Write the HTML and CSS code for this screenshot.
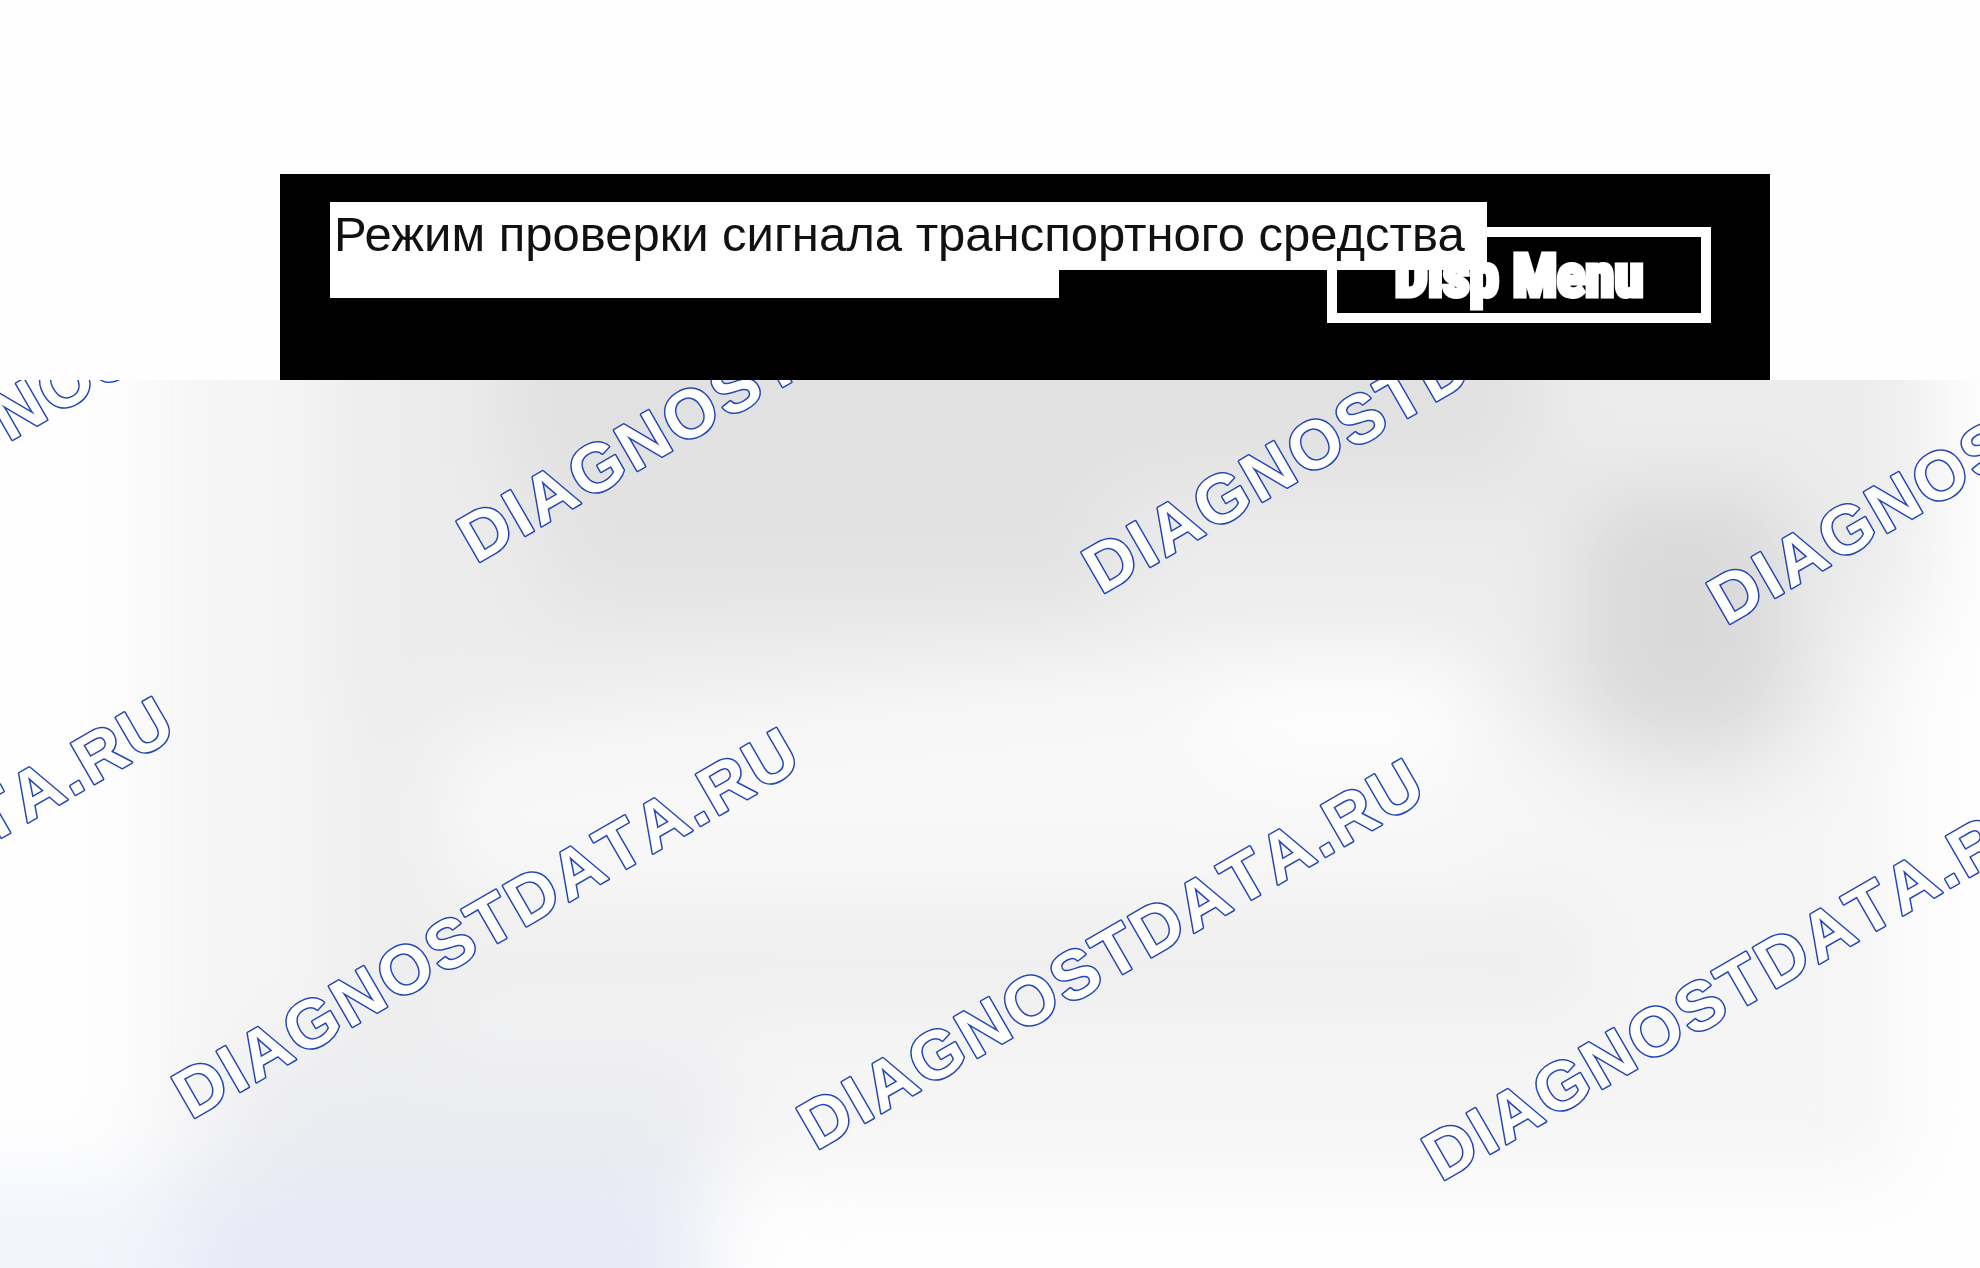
FILE: index.html
```
<!DOCTYPE html>
<html lang="ru">
<head>
    <meta charset="utf-8">
    <title>Режим проверки сигнала транспортного средства</title>
    <link rel="stylesheet" href="styles.css">
</head>
<body>
    <div id="display">
        <button type="button" id="menu-btn">Disp Menu</button>
        <div id="caption">
            <h1>Режим проверки сигнала транспортного средства</h1>
            <div class="second-line"></div>
        </div>
    </div>
    <div id="backdrop">
        <svg class="shade" viewBox="0 0 1980 888" preserveAspectRatio="none" aria-hidden="true">
            <defs>
                <filter id="soft" filterUnits="userSpaceOnUse" x="-300" y="-300" width="2600" height="1500">
                    <feGaussianBlur stdDeviation="42"/>
                </filter>
            </defs>
            <g filter="url(#soft)">
                <rect x="150" y="-300" width="1770" height="1100" fill="#f5f5f5"/>
                <rect x="330" y="-300" width="1600" height="540" fill="#ececec"/>
                <rect x="330" y="200" width="1520" height="140" fill="#ececec"/>
                <rect x="500" y="-300" width="1040" height="410" fill="#e1e1e1"/>
                <rect x="540" y="100" width="580" height="130" fill="#e2e2e2"/>
                <rect x="330" y="340" width="110" height="420" fill="#eeeeee"/>
                <path d="M600 330L1200 270H1480V510H460V370z" fill="#f8f8f8"/>
                <rect x="1220" y="290" width="250" height="90" fill="#fefefe"/>
                <rect x="440" y="530" width="1150" height="100" fill="#eeeeee"/>
                <rect x="1580" y="110" width="210" height="250" fill="#d9d9d9"/>
                <rect x="1620" y="340" width="150" height="60" fill="#e2e2e2"/>
                <rect x="1900" y="280" width="320" height="800" fill="#fefefe"/>
                <rect x="240" y="670" width="480" height="120" fill="#ebecf0"/>
                <rect x="160" y="790" width="540" height="300" fill="#e7eaf6"/>
                <rect x="-300" y="800" width="480" height="300" fill="#f2f4fc"/>
                <rect x="800" y="820" width="1400" height="300" fill="#fefefe"/>
            </g>
        </svg>
        <svg class="watermark">
            <text transform="translate(-149 153) rotate(-30)">DIAGNOSTDATA.RU</text>
            <text transform="translate(476 184) rotate(-30)">DIAGNOSTDATA.RU</text>
            <text transform="translate(1101 215) rotate(-30)">DIAGNOSTDATA.RU</text>
            <text transform="translate(1726 246) rotate(-30)">DIAGNOSTDATA.RU</text>
            <text transform="translate(-434 709) rotate(-30)">DIAGNOSTDATA.RU</text>
            <text transform="translate(191 740) rotate(-30)">DIAGNOSTDATA.RU</text>
            <text transform="translate(816 771) rotate(-30)">DIAGNOSTDATA.RU</text>
            <text transform="translate(1441 802) rotate(-30)">DIAGNOSTDATA.RU</text>
        </svg>
    </div>
</body>
</html>
```
FILE: styles.css
```
* {
    box-sizing: border-box;
}
body {
    display: flex;
    flex-direction: column;
    min-height: 100vh;
    margin: 0;
    background-color: #fefefe;
    font-family: "Liberation Sans", Arial, sans-serif;
}
#display {
    display: grid;
    grid-template-columns: 1fr;
    align-items: start;
    margin: 174px 210px 0 280px;
    padding: 28px 59px 82px 50px;
    background-color: black;
}
#caption {
    grid-area: 1 / 1;
    justify-self: start;
    z-index: 1;
}
#caption h1 {
    margin: 0;
    padding: 0 22px 4px 4px;
    background-color: white;
    color: #111;
    font-size: 49px;
    font-weight: normal;
    line-height: 64px;
    white-space: nowrap;
}
#caption .second-line {
    width: 63%;
    height: 28px;
    background-color: white;
}
#menu-btn {
    grid-area: 1 / 1;
    justify-self: end;
    width: 384px;
    height: 96px;
    margin: 25px 0 -26px;
    padding: 0;
    border: 10px solid white;
    background-color: black;
    color: white;
    font-family: "Roboto Condensed", Roboto, "Liberation Sans", sans-serif;
    font-size: 59px;
    font-weight: bold;
    -webkit-text-stroke: 5px white;
    cursor: pointer;
}
#backdrop {
    position: relative;
    flex: 1;
    overflow: hidden;
}
#backdrop svg {
    position: absolute;
    top: 0;
    left: 0;
    width: 100%;
    height: 100%;
}
.watermark text {
    fill: white;
    stroke: #2446b4;
    stroke-width: 3px;
    stroke-linejoin: round;
    paint-order: stroke;
    font-size: 68px;
    font-weight: bold;
    font-kerning: none;
    letter-spacing: 3px;
}
```
